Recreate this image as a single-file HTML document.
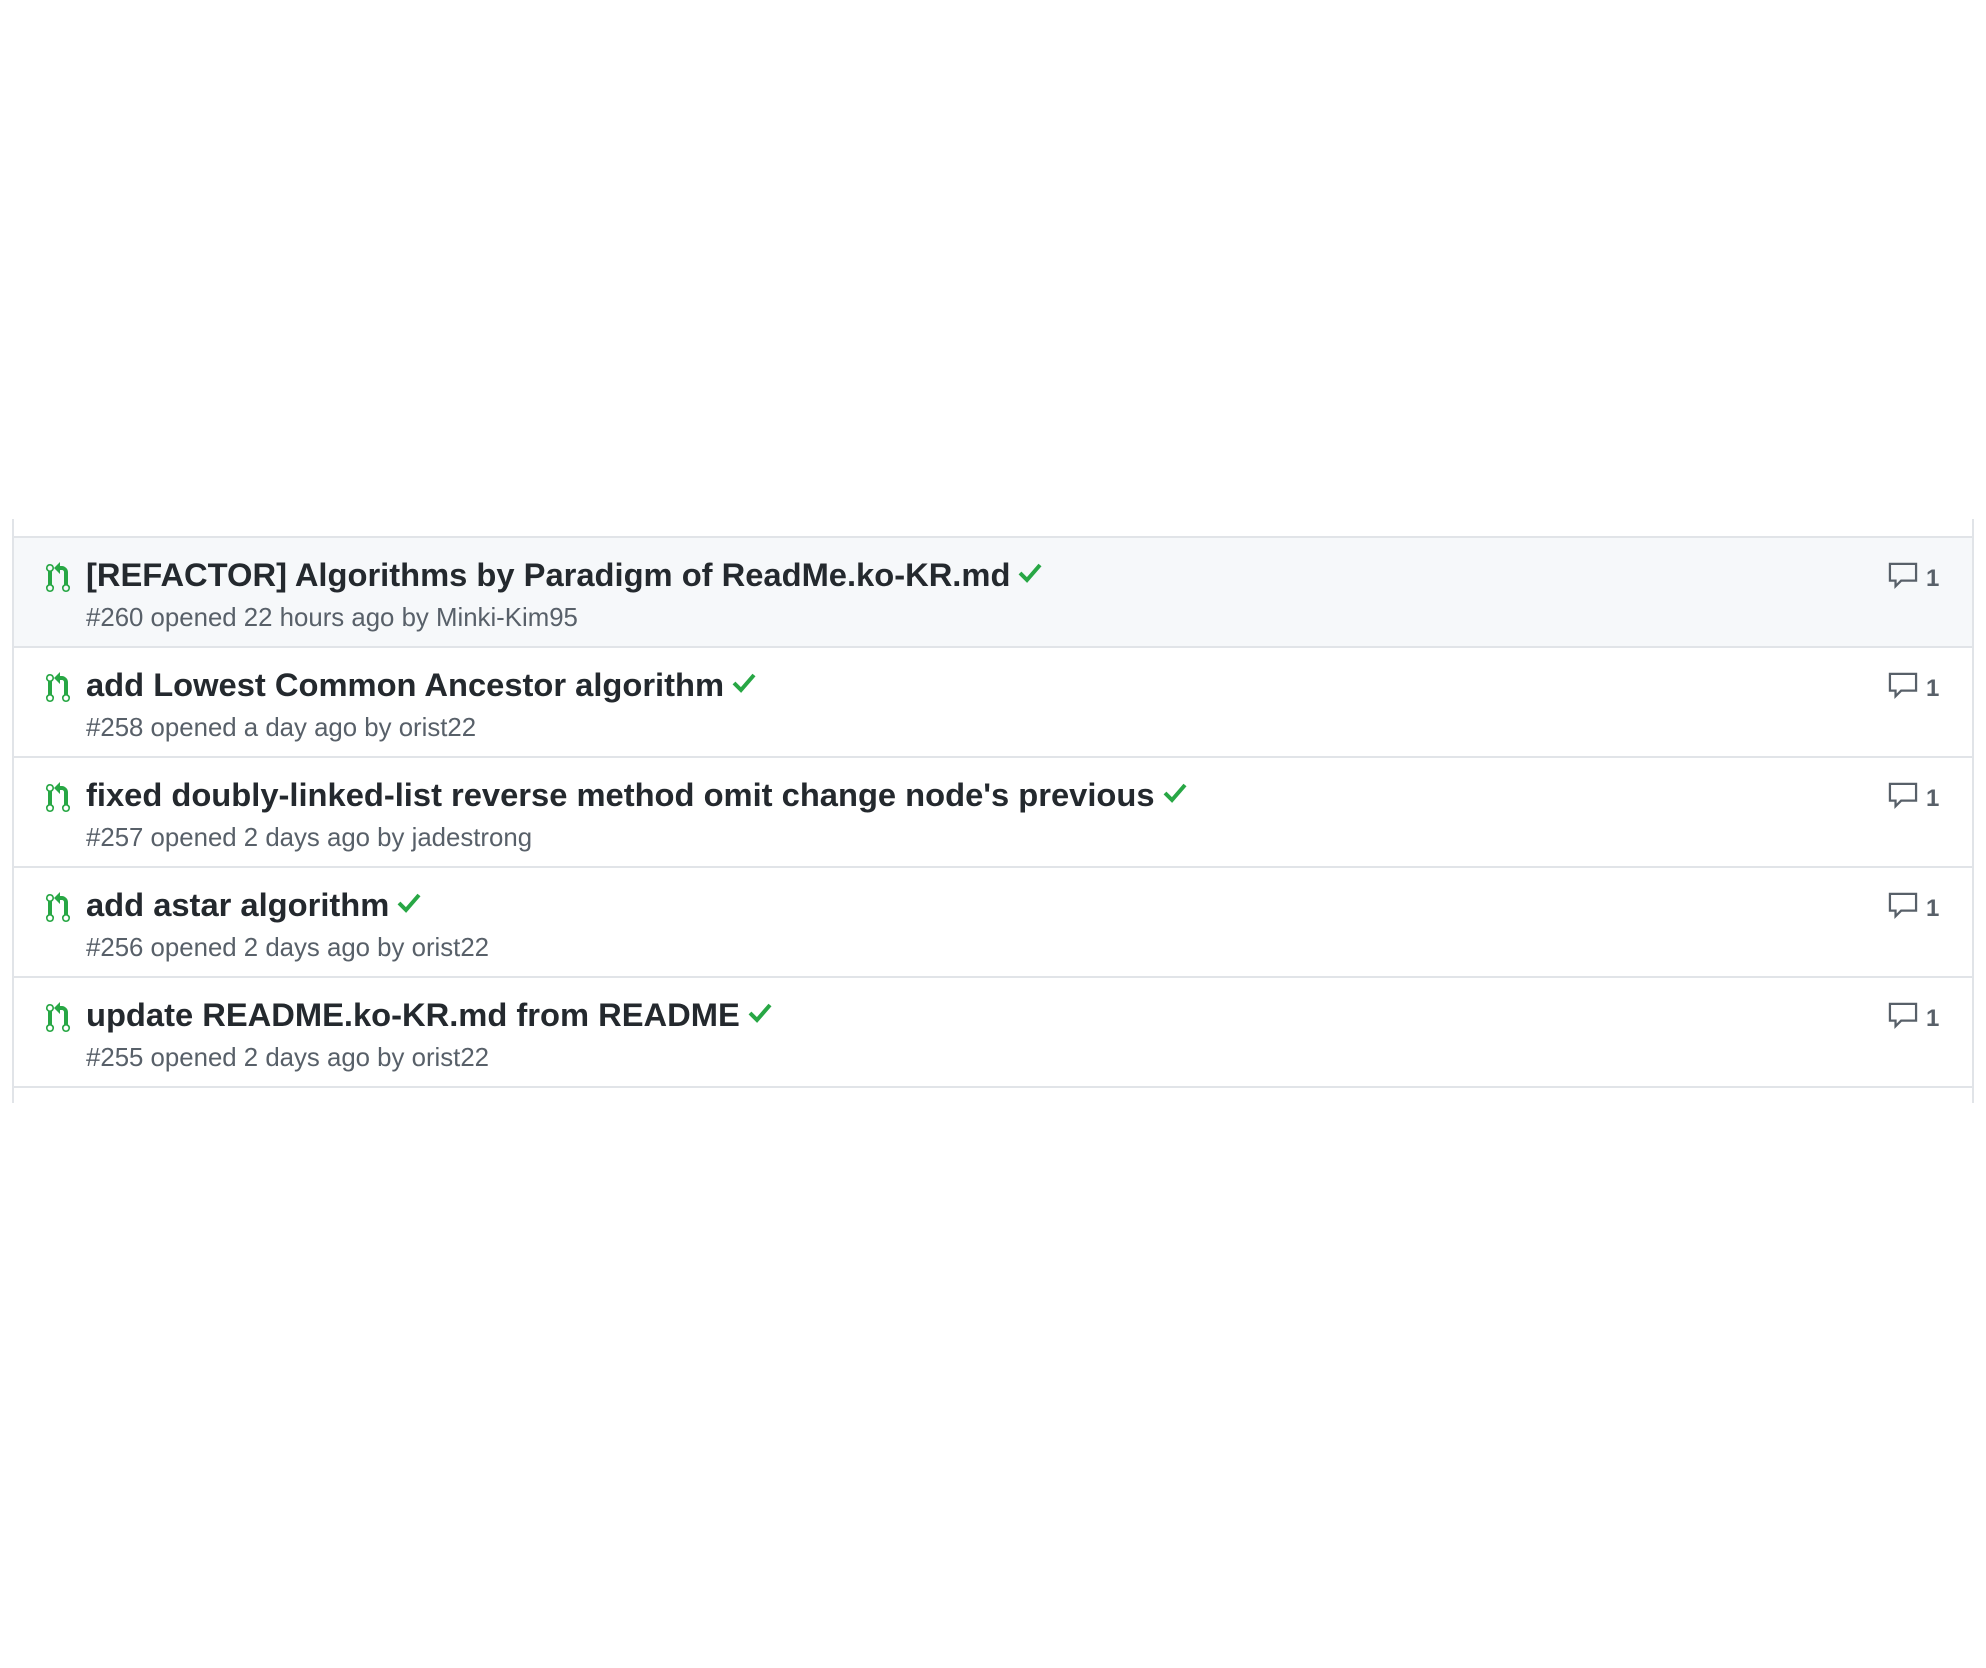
<!DOCTYPE html>
<html><head><meta charset="utf-8"><style>
html,body{margin:0;padding:0;background:#fff;width:1986px;height:1668px;overflow:hidden;font-family:"Liberation Sans",Arial,sans-serif}
.box{position:absolute;left:12px;top:519px;width:1958px;height:584px;border-left:2px solid #e1e4e8;border-right:2px solid #e1e4e8}
.row{position:absolute;left:0;width:1958px;height:108px;border-top:2px solid #e1e4e8}
.row.last{border-bottom:2px solid #e1e4e8}
.hl{background:#f6f8fa}
.ic{position:absolute;left:31px;top:24px}
.t{position:absolute;left:72px;top:18px;font-size:32.7px;font-weight:bold;color:#24292e;white-space:nowrap}
.t svg{vertical-align:2px;margin-left:8px}
.m{position:absolute;left:72px;top:66px;font-size:25.8px;color:#586069;white-space:nowrap}
.c{position:absolute;left:1874px;top:24px;font-size:24px;font-weight:bold;color:#586069}
.c svg{vertical-align:-4px;margin-right:8px}
</style></head><body>
<div class="box">
<div class="row hl" style="top:17px">
<svg class="ic" width="26" height="32" viewBox="0 0 12 16"><path fill="#28a745" d="M11 11.28V5c-.03-.78-.34-1.47-.94-2.06C9.46 2.35 8.78 2.03 8 2H7V0L4 3l3 3V4h1c.27.02.48.11.69.31.21.2.3.42.31.69v6.28A1.993 1.993 0 0 0 10 15a1.993 1.993 0 0 0 1-3.72zm-1 2.92c-.66 0-1.2-.55-1.2-1.2 0-.65.55-1.2 1.2-1.2.65 0 1.2.55 1.2 1.2 0 .65-.55 1.2-1.2 1.2zM4 3c0-1.11-.89-2-2-2a1.993 1.993 0 0 0-1 3.72v6.56A1.993 1.993 0 0 0 2 15a1.993 1.993 0 0 0 1-3.72V4.72c.59-.34 1-.98 1-1.72zm-.8 10c0 .66-.55 1.2-1.2 1.2-.65 0-1.2-.55-1.2-1.2 0-.65.55-1.2 1.2-1.2.65 0 1.2.55 1.2 1.2zM2 4.2C1.34 4.2.8 3.65.8 3c0-.65.55-1.2 1.2-1.2.65 0 1.2.55 1.2 1.2 0 .65-.55 1.2-1.2 1.2z"/></svg>
<div class="t">[REFACTOR] Algorithms by Paradigm of ReadMe.ko-KR.md<svg width="24" height="22" viewBox="0 0 12 11"><path fill="none" stroke="#28a745" stroke-width="2" d="M1 5.5l3.5 3.5L11 1.5"/></svg></div>
<div class="m">#260 opened 22 hours ago by Minki-Kim95</div>
<div class="c"><svg width="30" height="28" viewBox="0 0 16 15"><path fill="none" stroke="#586069" stroke-width="1.2" d="M1 1h14v9H7l-3 3v-3H1z"/></svg>1</div>
</div>
<div class="row" style="top:127px">
<svg class="ic" width="26" height="32" viewBox="0 0 12 16"><path fill="#28a745" d="M11 11.28V5c-.03-.78-.34-1.47-.94-2.06C9.46 2.35 8.78 2.03 8 2H7V0L4 3l3 3V4h1c.27.02.48.11.69.31.21.2.3.42.31.69v6.28A1.993 1.993 0 0 0 10 15a1.993 1.993 0 0 0 1-3.72zm-1 2.92c-.66 0-1.2-.55-1.2-1.2 0-.65.55-1.2 1.2-1.2.65 0 1.2.55 1.2 1.2 0 .65-.55 1.2-1.2 1.2zM4 3c0-1.11-.89-2-2-2a1.993 1.993 0 0 0-1 3.72v6.56A1.993 1.993 0 0 0 2 15a1.993 1.993 0 0 0 1-3.72V4.72c.59-.34 1-.98 1-1.72zm-.8 10c0 .66-.55 1.2-1.2 1.2-.65 0-1.2-.55-1.2-1.2 0-.65.55-1.2 1.2-1.2.65 0 1.2.55 1.2 1.2zM2 4.2C1.34 4.2.8 3.65.8 3c0-.65.55-1.2 1.2-1.2.65 0 1.2.55 1.2 1.2 0 .65-.55 1.2-1.2 1.2z"/></svg>
<div class="t">add Lowest Common Ancestor algorithm<svg width="24" height="22" viewBox="0 0 12 11"><path fill="none" stroke="#28a745" stroke-width="2" d="M1 5.5l3.5 3.5L11 1.5"/></svg></div>
<div class="m">#258 opened a day ago by orist22</div>
<div class="c"><svg width="30" height="28" viewBox="0 0 16 15"><path fill="none" stroke="#586069" stroke-width="1.2" d="M1 1h14v9H7l-3 3v-3H1z"/></svg>1</div>
</div>
<div class="row" style="top:237px">
<svg class="ic" width="26" height="32" viewBox="0 0 12 16"><path fill="#28a745" d="M11 11.28V5c-.03-.78-.34-1.47-.94-2.06C9.46 2.35 8.78 2.03 8 2H7V0L4 3l3 3V4h1c.27.02.48.11.69.31.21.2.3.42.31.69v6.28A1.993 1.993 0 0 0 10 15a1.993 1.993 0 0 0 1-3.72zm-1 2.92c-.66 0-1.2-.55-1.2-1.2 0-.65.55-1.2 1.2-1.2.65 0 1.2.55 1.2 1.2 0 .65-.55 1.2-1.2 1.2zM4 3c0-1.11-.89-2-2-2a1.993 1.993 0 0 0-1 3.72v6.56A1.993 1.993 0 0 0 2 15a1.993 1.993 0 0 0 1-3.72V4.72c.59-.34 1-.98 1-1.72zm-.8 10c0 .66-.55 1.2-1.2 1.2-.65 0-1.2-.55-1.2-1.2 0-.65.55-1.2 1.2-1.2.65 0 1.2.55 1.2 1.2zM2 4.2C1.34 4.2.8 3.65.8 3c0-.65.55-1.2 1.2-1.2.65 0 1.2.55 1.2 1.2 0 .65-.55 1.2-1.2 1.2z"/></svg>
<div class="t">fixed doubly-linked-list reverse method omit change node's previous<svg width="24" height="22" viewBox="0 0 12 11"><path fill="none" stroke="#28a745" stroke-width="2" d="M1 5.5l3.5 3.5L11 1.5"/></svg></div>
<div class="m">#257 opened 2 days ago by jadestrong</div>
<div class="c"><svg width="30" height="28" viewBox="0 0 16 15"><path fill="none" stroke="#586069" stroke-width="1.2" d="M1 1h14v9H7l-3 3v-3H1z"/></svg>1</div>
</div>
<div class="row" style="top:347px">
<svg class="ic" width="26" height="32" viewBox="0 0 12 16"><path fill="#28a745" d="M11 11.28V5c-.03-.78-.34-1.47-.94-2.06C9.46 2.35 8.78 2.03 8 2H7V0L4 3l3 3V4h1c.27.02.48.11.69.31.21.2.3.42.31.69v6.28A1.993 1.993 0 0 0 10 15a1.993 1.993 0 0 0 1-3.72zm-1 2.920c-.66 0-1.2-.55-1.2-1.2 0-.65.55-1.2 1.2-1.2.65 0 1.2.55 1.2 1.2 0 .65-.55 1.2-1.2 1.2zM4 3c0-1.11-.89-2-2-2a1.993 1.993 0 0 0-1 3.72v6.56A1.993 1.993 0 0 0 2 15a1.993 1.993 0 0 0 1-3.72V4.72c.59-.34 1-.98 1-1.72zm-.8 10c0 .66-.55 1.2-1.2 1.2-.65 0-1.2-.55-1.2-1.2 0-.65.55-1.2 1.2-1.2.65 0 1.2.55 1.2 1.2zM2 4.2C1.34 4.2.8 3.65.8 3c0-.65.55-1.2 1.2-1.2.65 0 1.2.55 1.2 1.2 0 .65-.55 1.2-1.2 1.2z"/></svg>
<div class="t">add astar algorithm<svg width="24" height="22" viewBox="0 0 12 11"><path fill="none" stroke="#28a745" stroke-width="2" d="M1 5.5l3.5 3.5L11 1.5"/></svg></div>
<div class="m">#256 opened 2 days ago by orist22</div>
<div class="c"><svg width="30" height="28" viewBox="0 0 16 15"><path fill="none" stroke="#586069" stroke-width="1.2" d="M1 1h14v9H7l-3 3v-3H1z"/></svg>1</div>
</div>
<div class="row last" style="top:457px">
<svg class="ic" width="26" height="32" viewBox="0 0 12 16"><path fill="#28a745" d="M11 11.28V5c-.03-.78-.34-1.47-.94-2.06C9.46 2.35 8.78 2.03 8 2H7V0L4 3l3 3V4h1c.27.02.48.11.69.31.21.2.3.42.31.69v6.28A1.993 1.993 0 0 0 10 15a1.993 1.993 0 0 0 1-3.72zm-1 2.92c-.66 0-1.2-.55-1.2-1.2 0-.65.55-1.2 1.2-1.2.65 0 1.2.55 1.2 1.2 0 .65-.55 1.2-1.2 1.2zM4 3c0-1.11-.89-2-2-2a1.993 1.993 0 0 0-1 3.72v6.56A1.993 1.993 0 0 0 2 15a1.993 1.993 0 0 0 1-3.72V4.72c.59-.34 1-.98 1-1.72zm-.8 10c0 .66-.55 1.2-1.2 1.2-.65 0-1.2-.55-1.2-1.2 0-.65.55-1.2 1.2-1.2.65 0 1.2.55 1.2 1.2zM2 4.2C1.34 4.2.8 3.65.8 3c0-.65.55-1.2 1.2-1.2.65 0 1.2.55 1.2 1.2 0 .65-.55 1.2-1.2 1.2z"/></svg>
<div class="t">update README.ko-KR.md from README<svg width="24" height="22" viewBox="0 0 12 11"><path fill="none" stroke="#28a745" stroke-width="2" d="M1 5.5l3.5 3.5L11 1.5"/></svg></div>
<div class="m">#255 opened 2 days ago by orist22</div>
<div class="c"><svg width="30" height="28" viewBox="0 0 16 15"><path fill="none" stroke="#586069" stroke-width="1.2" d="M1 1h14v9H7l-3 3v-3H1z"/></svg>1</div>
</div>
</div>
</body></html>
